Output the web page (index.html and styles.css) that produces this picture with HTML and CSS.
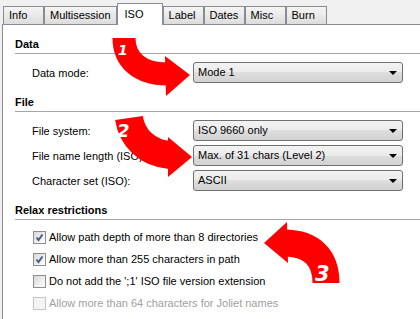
FILE: index.html
```html
<!DOCTYPE html>
<html lang="en">
<head>
  <meta charset="UTF-8">
  <meta name="viewport" content="width=device-width, initial-scale=1.0">
  <title>ISO options</title>
  <link rel="stylesheet" href="styles.css">
</head>
<body>
  <div class="tabs">
    <div class="tab">Info</div>
    <div class="tab">Multisession</div>
    <div class="tab active">ISO</div>
    <div class="tab">Label</div>
    <div class="tab">Dates</div>
    <div class="tab">Misc</div>
    <div class="tab">Burn</div>
  </div>

  <div class="panel">
    <div class="group-title">Data</div>
    <div class="fields">
      <div class="field">
        <span class="field-label">Data mode:</span>
        <div class="combo">Mode 1</div>
      </div>
    </div>

    <div class="group-title">File</div>
    <div class="fields">
      <div class="field">
        <span class="field-label">File system:</span>
        <div class="combo">ISO 9660 only</div>
      </div>
      <div class="field">
        <span class="field-label">File name length (ISO):</span>
        <div class="combo">Max. of 31 chars (Level 2)</div>
      </div>
      <div class="field">
        <span class="field-label">Character set (ISO):</span>
        <div class="combo">ASCII</div>
      </div>
    </div>

    <div class="group-title">Relax restrictions</div>
    <div class="checks">
      <label class="check"><span class="box checked"></span>Allow path depth of more than 8 directories</label>
      <label class="check"><span class="box checked"></span>Allow more than 255 characters in path</label>
      <label class="check"><span class="box"></span>Do not add the ';1' ISO file version extension</label>
      <label class="check disabled"><span class="box"></span>Allow more than 64 characters for Joliet names</label>
    </div>
  </div>

  <!-- numbered hint arrows drawn over the dialog -->
  <svg class="arrows" width="420" height="319" viewBox="0 0 420 319">
    <g fill="#ff0000" stroke="none">
      <polygon points="165,56 190,75 166,96"/>
      <polygon points="168,137 192,157 168,177"/>
      <polygon points="287,222 264,243 288,263"/>
    </g>
    <g fill="none" stroke="#ff0000">
      <path d="M124 38 C124 60 140 74 167 74" stroke-width="23"/>
      <path d="M129 118 C132 138 147 153 170 155" stroke-width="28"/>
      <path d="M284 243 C312 243 326 258 326 283" stroke-width="27"/>
    </g>
    <g class="num">
      <text x="118" y="55" font-size="14">1</text>
      <text x="117" y="137" font-size="18">2</text>
      <text x="315" y="281" font-size="21">3</text>
    </g>
  </svg>
</body>
</html>
```

FILE: styles.css
```css
body {
  margin: 0;
  width: 420px;
  height: 319px;
  overflow: hidden;
  position: relative;
  background-color: #f0f0f0;
  font-family: "Liberation Sans", Arial, sans-serif;
  font-size: 11px;
  color: #000;
}
.tabs {
  display: flex;
  align-items: flex-end;
  height: 24px;
  padding-left: 3px;
}
.tab {
  box-sizing: border-box;
  height: 18px;
  min-width: 41px;
  padding: 0 5px;
  line-height: 17px;
  border: 1px solid #898c95;
  border-bottom: none;
  background: linear-gradient(#f4f4f4, #e9e9e9 50%, #dcdcdc);
}
.tab.active {
  position: relative;
  z-index: 1;
  height: 22px;
  min-width: 46px;
  padding: 0 7px;
  line-height: 20px;
  margin-bottom: -1px;
  background: #fff;
}
.panel {
  margin-left: 2px;
  height: 300px;
  border-left: 1px solid #898c95;
  border-top: 1px solid #898c95;
  background-color: #fff;
}
.group-title {
  box-sizing: border-box;
  height: 29px;
  margin-left: 12px;
  padding-top: 12px;
  line-height: 14px;
  font-weight: bold;
  border-bottom: 1px solid #a5a5a5;
}
.fields {
  display: flex;
  flex-direction: column;
  gap: 4px;
  padding: 8px 0 0 29px;
}
.field {
  display: flex;
  align-items: center;
  height: 21px;
}
.field-label {
  width: 161px;
}
.combo {
  position: relative;
  box-sizing: border-box;
  width: 210px;
  height: 21px;
  padding-left: 4px;
  line-height: 19px;
  border: 1px solid #707070;
  border-radius: 3px;
  background: linear-gradient(#f3f3f3, #ebebeb 50%, #dedede 50%, #d2d2d2);
}
.combo::after {
  content: "";
  position: absolute;
  right: 5px;
  top: 8px;
  border-left: 4px solid transparent;
  border-right: 4px solid transparent;
  border-top: 4px solid #000;
}
.checks {
  padding: 6px 0 0 30px;
}
.check {
  display: flex;
  align-items: center;
  gap: 3px;
  height: 22px;
}
.box {
  box-sizing: border-box;
  width: 13px;
  height: 13px;
  border: 1px solid #8e8f8f;
  background: linear-gradient(135deg, #d8d8d8, #f4f4f4 70%, #fff);
}
.box.checked {
  background:
    url("data:image/svg+xml;utf8,<svg xmlns='http://www.w3.org/2000/svg' width='11' height='11'><path d='M2.5 5.5 L4.5 8 L8.5 2.5' fill='none' stroke='%234a5d8f' stroke-width='2'/></svg>") center / 11px 11px no-repeat,
    linear-gradient(135deg, #d8d8d8, #f4f4f4 70%, #fff);
}
.check.disabled {
  color: #a0a0a0;
}
.check.disabled .box {
  border-color: #c6c6c6;
  background: #f4f4f4;
}
.arrows {
  position: absolute;
  left: 0;
  top: 0;
  pointer-events: none;
}
.num text {
  fill: #fff;
  font-family: "DejaVu Sans", sans-serif;
  font-weight: bold;
  font-style: italic;
}
```
